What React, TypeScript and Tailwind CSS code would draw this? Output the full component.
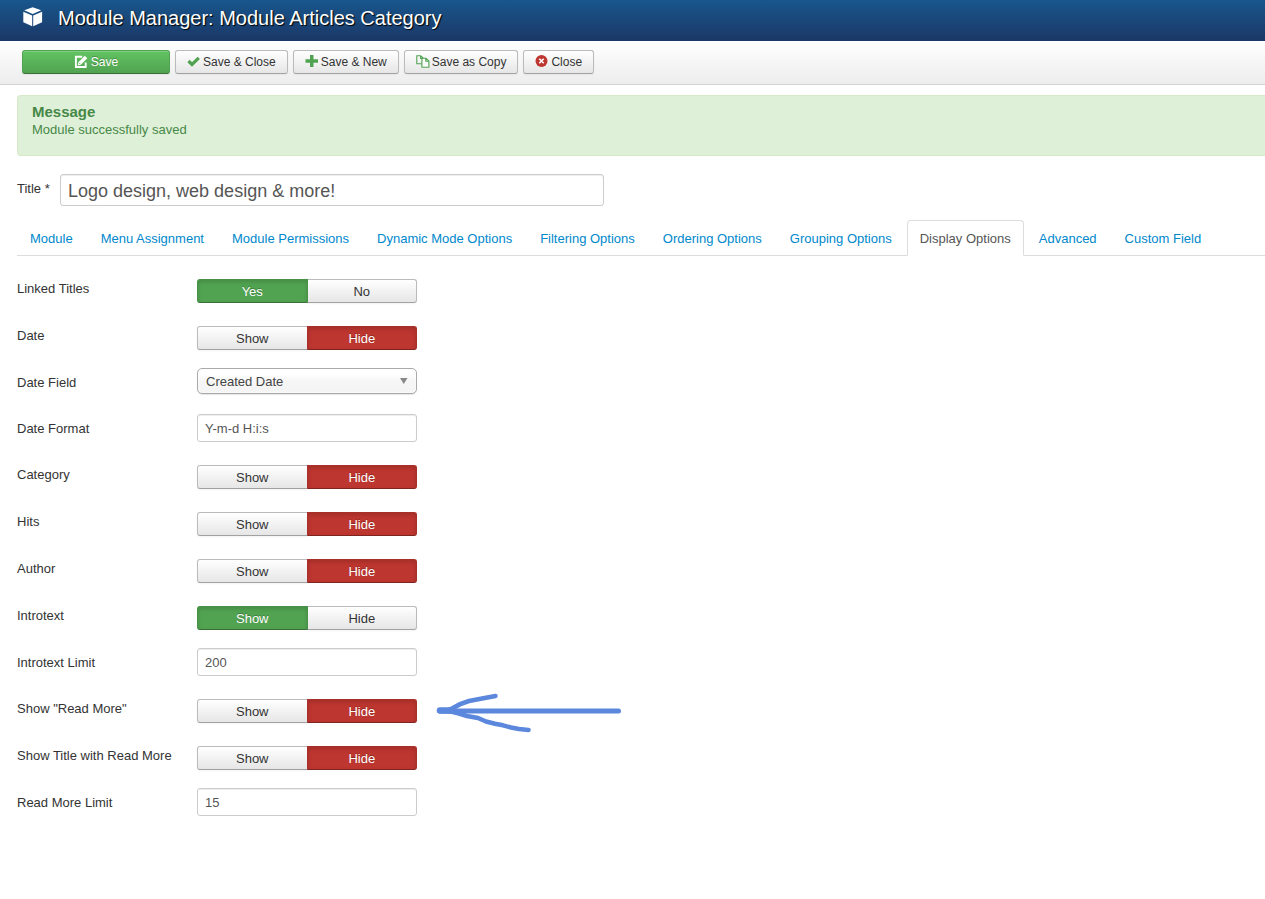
import { useId, useState } from "react";
import type { ReactNode } from "react";

const tabs = [
  "Module",
  "Menu Assignment",
  "Module Permissions",
  "Dynamic Mode Options",
  "Filtering Options",
  "Ordering Options",
  "Grouping Options",
  "Display Options",
  "Advanced",
  "Custom Field",
];

function CubeIcon() {
  return (
    <svg width="20" height="20" viewBox="0 0 20 20" fill="#fff" className="mt-[7px]" aria-hidden="true">
      <path d="M9.700 0.200 18.200 3.300 9.700 7 1.200 3.300Z" />
      <path d="M0.300 4.700 9.200 8.600V19.300L0.300 15.300Z" />
      <path d="M19.100 4.700 10.200 8.600V19.300L19.100 15.300Z" />
    </svg>
  );
}

function EditIcon() {
  return (
    <svg width="14" height="14" viewBox="0 0 14 14" aria-hidden="true">
      <path d="M8.200 1.800H1.900V12H11.700V7.400" fill="none" stroke="#fff" strokeWidth="1.9" />
      <path d="M4.200 7.400 10.700 0.700 13.300 3.300 6.800 9.800 3.800 10.400Z" fill="#fff" />
      <path d="M5 7.800 6.300 9.100" stroke="#55b055" strokeWidth="0.800" />
    </svg>
  );
}

function CheckIcon() {
  return (
    <svg width="14" height="14" viewBox="0 0 14 14" aria-hidden="true">
      <path d="M1.500 6 5 9.500 11.800 2.800" fill="none" stroke="#51a351" strokeWidth="3.200" />
    </svg>
  );
}

function PlusIcon() {
  return (
    <svg width="14" height="14" viewBox="0 0 14 14" aria-hidden="true">
      <path d="M5 0H8.500V4.300H13V7.700H8.500V12H5V7.700H0.500V4.300H5Z" fill="#51a351" />
    </svg>
  );
}

function CopyIcon() {
  return (
    <svg width="14" height="14" viewBox="0 0 14 14" fill="none" stroke="#51a351" strokeWidth="1.100" aria-hidden="true">
      <path d="M5.800 8.800H0.800V0.700H4.600L7.400 3.200M4.600 0.700V3.400H7.400" />
      <path d="M5.900 3.200H10L12.900 6V12.300H5.900ZM9.800 3.200V6.200H12.900" fill="#fafafa" />
    </svg>
  );
}

function CancelIcon() {
  return (
    <svg width="14" height="14" viewBox="0 0 14 14" aria-hidden="true">
      <circle cx="6.500" cy="6" r="6" fill="#bd362f" />
      <path d="M4.300 3.800 8.700 8.200M8.700 3.800 4.300 8.200" stroke="#fff" strokeWidth="1.600" />
    </svg>
  );
}

function ToolbarButton({ icon, children }: { icon: ReactNode; children: ReactNode }) {
  return (
    <button
      type="button"
      className="flex h-6 items-center gap-[2px] whitespace-nowrap rounded-[3px] border border-[#bbb] border-b-[#a2a2a2] bg-linear-to-b from-white to-[#e6e6e6] px-[11px] text-[12px] leading-[18px] text-[#333] shadow-[0_1px_2px_rgba(0,0,0,0.05)]"
    >
      {icon}
      {children}
    </button>
  );
}

function Row({ label, htmlFor, children }: { label: string; htmlFor?: string; children: ReactNode }) {
  return (
    <div className="mb-[18px] flex items-start">
      <label htmlFor={htmlFor} className="w-[180px] shrink-0 pt-[6px]">
        {label}
      </label>
      {children}
    </div>
  );
}

function Toggle({ label, options, initial }: { label: string; options: [string, string]; initial: 0 | 1 }) {
  const [value, setValue] = useState<number>(initial);
  const id = useId();
  const base =
    "flex h-6 flex-1 cursor-pointer items-center justify-center border pt-[2px] text-[13px] leading-[18px] first:rounded-l-[3px] last:-ml-px last:rounded-r-[3px] has-[:focus-visible]:outline-2";
  const off =
    "border-[#bbb] border-b-[#a2a2a2] bg-linear-to-b from-white to-[#e6e6e6] text-[#333] shadow-[0_1px_2px_rgba(0,0,0,0.05)]";
  const yes =
    "z-10 border-[#479247] border-b-[#387038] bg-[#51a351] text-white shadow-[inset_0_2px_4px_rgba(0,0,0,0.15)] [text-shadow:0_-1px_0_rgba(0,0,0,0.25)]";
  const no =
    "z-10 border-[#a9302a] border-b-[#802420] bg-[#bd362f] text-white shadow-[inset_0_2px_4px_rgba(0,0,0,0.15)] [text-shadow:0_-1px_0_rgba(0,0,0,0.25)]";
  return (
    <div className="mb-[18px] flex items-start">
      <span id={id} className="w-[180px] shrink-0 pt-[6px]">
        {label}
      </span>
      <div role="radiogroup" aria-labelledby={id} className="flex w-[220px] pt-[5px]">
        {options.map((option, i) => (
          <label key={option} className={`${base} ${value !== i ? off : i === 0 ? yes : no}`}>
            <input
              type="radio"
              name={id}
              checked={value === i}
              onChange={() => setValue(i)}
              className="sr-only"
            />
            {option}
          </label>
        ))}
      </div>
    </div>
  );
}

function TextRow({ id, label, value }: { id: string; label: string; value: string }) {
  return (
    <Row label={label} htmlFor={id}>
      <input
        id={id}
        type="text"
        defaultValue={value}
        className="h-7 w-[220px] rounded-[3px] border border-[#ccc] bg-white px-[7px] text-[13px] leading-[18px] text-[#555] shadow-[inset_0_1px_1px_rgba(0,0,0,0.075)]"
      />
    </Row>
  );
}

function Arrow() {
  return (
    <svg
      width="190"
      height="48"
      viewBox="0 0 190 48"
      fill="none"
      stroke="#5b88dc"
      strokeWidth="5"
      strokeLinecap="round"
      strokeLinejoin="round"
      className="absolute top-[-6px] left-[418px]"
      aria-hidden="true"
    >
      <path d="M5 23H183.500" />
      <path d="M6 22.500H12L18 20Q25 15.500 34 13L47 10.500L60.500 8" strokeWidth="4.500" />
      <path d="M6 22.500L15 23.300L24 25.500L32 28L43 30L51 33.500L60 35.800L68 37.300L76 39.500L84 41L93.500 42" strokeWidth="4.500" />
      <path d="M5 22.500H16" strokeWidth="6.500" />
    </svg>
  );
}

export default function App() {
  return (
    <div className="overflow-x-hidden bg-white font-['Liberation_Sans',Arial,sans-serif] text-[13px] leading-[18px] text-[#333]">
      <header className="flex h-[41px] items-start gap-[15px] bg-linear-to-b from-[#17568c] to-[#1a3867] pl-[23px]">
        <CubeIcon />
        <h1 className="text-[20px] leading-[36px] text-white [text-shadow:1px_1px_1px_#000]">
          Module Manager: Module Articles Category
        </h1>
      </header>

      <div className="flex h-11 items-start gap-[5px] border-b border-[#d3d3d3] bg-linear-to-b from-white to-[#ededed] pt-[9px] pl-[22px]">
        <button
          type="button"
          className="flex h-6 w-[148px] items-center justify-center gap-[3px] rounded-[3px] border border-[#51a351] border-b-[#387038] bg-linear-to-b from-[#62c462] to-[#51a351] text-[12px] leading-[18px] text-white shadow-[inset_0_1px_0_rgba(255,255,255,0.2),0_1px_2px_rgba(0,0,0,0.05)] [text-shadow:0_-1px_0_rgba(0,0,0,0.25)]"
        >
          <EditIcon />
          Save
        </button>
        <ToolbarButton icon={<CheckIcon />}>Save &amp; Close</ToolbarButton>
        <ToolbarButton icon={<PlusIcon />}>Save &amp; New</ToolbarButton>
        <ToolbarButton icon={<CopyIcon />}>Save as Copy</ToolbarButton>
        <ToolbarButton icon={<CancelIcon />}>Close</ToolbarButton>
      </div>

      <main className="pt-[10px] pl-[17px]">
        <div
          role="status"
          className="h-[61px] rounded-l-[4px] border border-r-0 border-[#d6e9c6] bg-[#dff0d8] pt-[7px] pl-[14px] text-[#468847]"
        >
          <h4 className="text-[15px] leading-[18px] font-bold">Message</h4>
          <p>Module successfully saved</p>
        </div>

        <div className="mt-[18px] flex items-start">
          <label htmlFor="title" className="w-[43px] pt-[6px]">
            Title *
          </label>
          <input
            id="title"
            type="text"
            defaultValue="Logo design, web design & more!"
            className="h-8 w-[544px] rounded-[3px] border border-[#ccc] px-[7px] pt-[2px] text-[18px] leading-[22px] text-[#555] shadow-[inset_0_1px_1px_rgba(0,0,0,0.075)]"
          />
        </div>

        <nav className="mt-[14px] flex gap-[2px] border-b border-[#ddd]">
          {tabs.map((tab) => (
            <a
              key={tab}
              href="#"
              className={
                tab === "Display Options"
                  ? "-mb-px rounded-t-[4px] border border-[#ddd] border-b-white bg-white px-3 pt-[9px] pb-[7px] whitespace-nowrap text-[#555]"
                  : "-mb-px border border-transparent px-3 pt-[9px] pb-[7px] whitespace-nowrap text-[#08c]"
              }
            >
              {tab}
            </a>
          ))}
        </nav>

        <form className="pt-[18px] pb-16">
          <Toggle label="Linked Titles" options={["Yes", "No"]} initial={0} />
          <Toggle label="Date" options={["Show", "Hide"]} initial={1} />
          <Row label="Date Field" htmlFor="date-field">
            <div className="relative mb-[2px] w-[220px]">
              <select
                id="date-field"
                className="block h-[26px] w-full appearance-none rounded-[5px] border border-[#aaa] bg-linear-to-b from-white from-20% via-[#f6f6f6] via-50% to-[#f4f4f4] px-2 pt-[2px] text-[13px] text-[#444] shadow-[inset_0_0_3px_#fff,0_1px_1px_rgba(0,0,0,0.1)]"
              >
                <option>Created Date</option>
                <option>Modified Date</option>
                <option>Published Date</option>
              </select>
              <svg
                width="8"
                height="6"
                viewBox="0 0 8 6"
                className="pointer-events-none absolute top-[10px] right-[9px]"
                aria-hidden="true"
              >
                <path d="M0 0H7.500L3.750 6Z" fill="#888" />
              </svg>
            </div>
          </Row>
          <TextRow id="date-format" label="Date Format" value="Y-m-d H:i:s" />
          <Toggle label="Category" options={["Show", "Hide"]} initial={1} />
          <Toggle label="Hits" options={["Show", "Hide"]} initial={1} />
          <Toggle label="Author" options={["Show", "Hide"]} initial={1} />
          <Toggle label="Introtext" options={["Show", "Hide"]} initial={0} />
          <TextRow id="introtext-limit" label="Introtext Limit" value="200" />
          <div className="relative">
            <Toggle label={'Show "Read More"'} options={["Show", "Hide"]} initial={1} />
            <Arrow />
          </div>
          <Toggle label="Show Title with Read More" options={["Show", "Hide"]} initial={1} />
          <TextRow id="read-more-limit" label="Read More Limit" value="15" />
        </form>
      </main>
    </div>
  );
}
